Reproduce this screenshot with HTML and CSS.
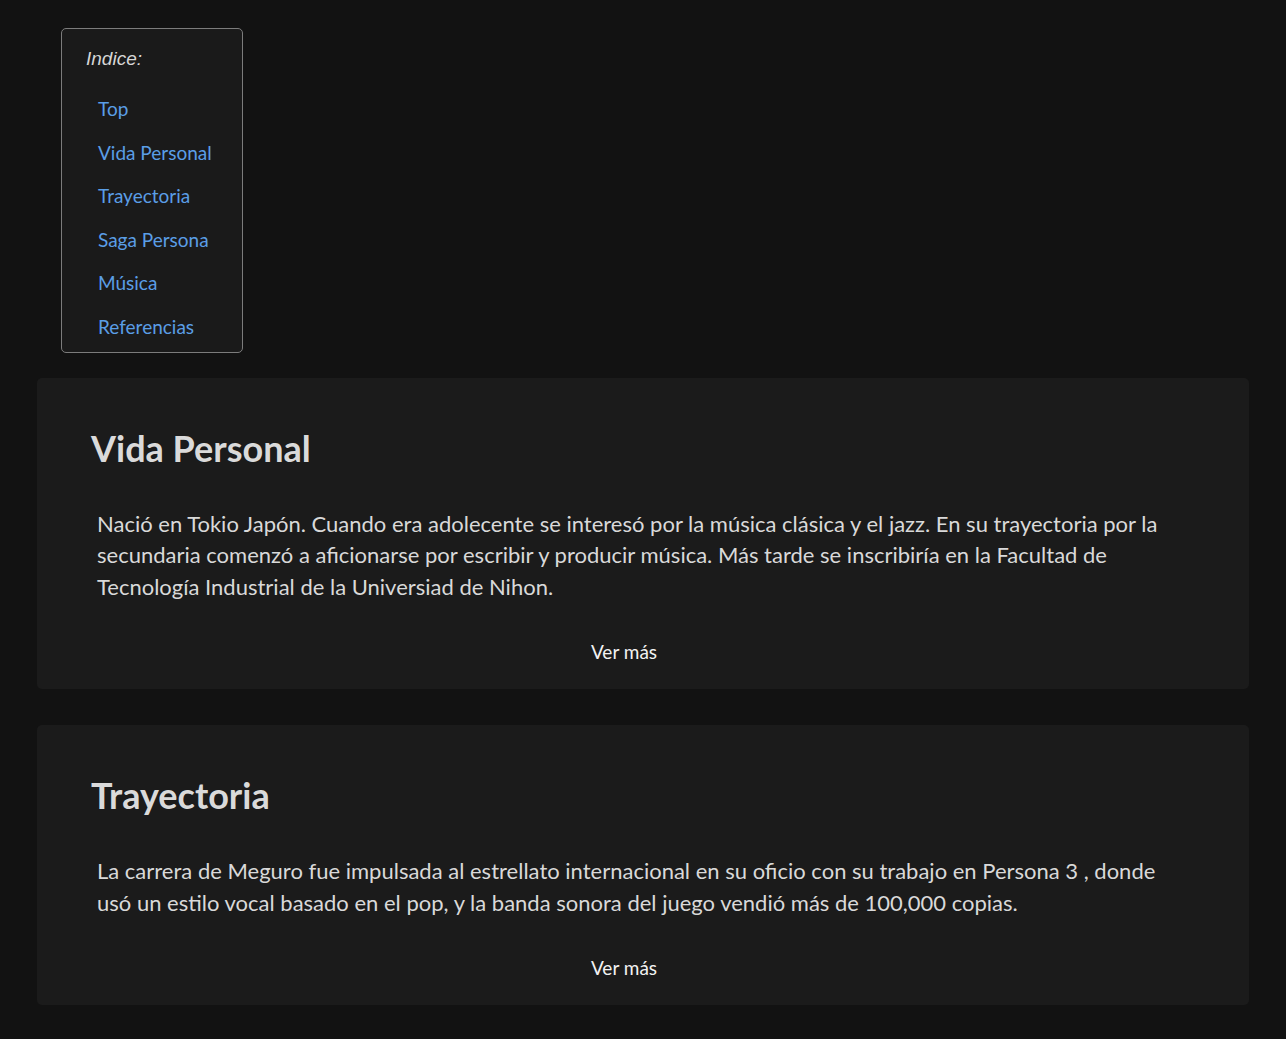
FILE: index.html
```html
<!DOCTYPE html>
<html lang="es">
<head>
<meta charset="utf-8">
<title>Shoji Meguro</title>
<link rel="stylesheet" href="styles.css">
</head>
<body>
<div class="page">
  <nav class="indice">
    <p class="indice-title">Indice:</p>
    <ul class="indice-list">
      <li><a href="#top">Top</a></li>
      <li><a href="#vida">Vida Personal</a></li>
      <li><a href="#trayectoria">Trayectoria</a></li>
      <li><a href="#saga">Saga Persona</a></li>
      <li><a href="#musica">Música</a></li>
      <li><a href="#referencias">Referencias</a></li>
    </ul>
  </nav>
  <section class="card" id="vida">
    <h2 class="card-title">Vida Personal</h2>
    <p class="card-text">Nació en Tokio Japón. Cuando era adolecente se interesó por la música clásica y el jazz. En su trayectoria por la secundaria comenzó a aficionarse por escribir y producir música. Más tarde se inscribiría en la Facultad de Tecnología Industrial de la Universiad de Nihon.</p>
    <div class="card-more"><span class="more-btn">Ver más</span></div>
  </section>
  <section class="card" id="trayectoria">
    <h2 class="card-title">Trayectoria</h2>
    <p class="card-text">La carrera de Meguro fue impulsada al estrellato internacional en su oficio con su trabajo en Persona 3 , donde usó un estilo vocal basado en el pop, y la banda sonora del juego vendió más de 100,000 copias.</p>
    <div class="card-more"><span class="more-btn">Ver más</span></div>
  </section>
</div>
</body>
</html>
```
FILE: styles.css
```css
html, body {
  margin: 0;
  padding: 0;
  background: #121212;
}
body {
  font-family: Lato, "Open Sans", sans-serif;
  color: #d9d9d9;
}
.page {
  padding: 28px 37px 0 37px;
  display: flex;
  flex-direction: column;
}
.indice {
  align-self: flex-start;
  margin-left: 24px;
  width: 182px;
  box-sizing: border-box;
  border: 1px solid #7c7c7c;
  border-radius: 5px;
  background: #1a1a1a;
  padding: 18px 0 12px 24px;
}
.indice-title {
  margin: 0;
  font-family: "Liberation Sans", Arial, sans-serif;
  font-style: italic;
  font-size: 19px;
  color: #d6d6d6;
  line-height: 24px;
}
.indice-list {
  list-style: none;
  margin: 25px 0 0 0;
  padding: 0 0 0 12px;
  display: flex;
  flex-direction: column;
  gap: 17.6px;
}
.indice-list li {
  height: 26px;
  line-height: 26px;
}
.indice-list a {
  color: #5a9ee6;
  text-decoration: none;
  font-size: 19px;
}
.card {
  margin-top: 25px;
  background: #1b1b1b;
  border-radius: 5px;
  padding: 47px 54px 23px 54px;
}
.card + .card {
  margin-top: 36px;
}
.card-title {
  margin: 0;
  font-size: 36px;
  font-weight: 700;
  color: #dadada;
  line-height: 46px;
}
.card-text {
  margin: 37px 0 0 6px;
  font-size: 22px;
  line-height: 31.5px;
  color: #d9d9d9;
}
.card-more {
  margin-top: 36px;
  display: flex;
  justify-content: center;
  padding-right: 38px;
}
.more-btn {
  color: #f2f2f2;
  font-size: 19px;
  line-height: 28px;
}
```
